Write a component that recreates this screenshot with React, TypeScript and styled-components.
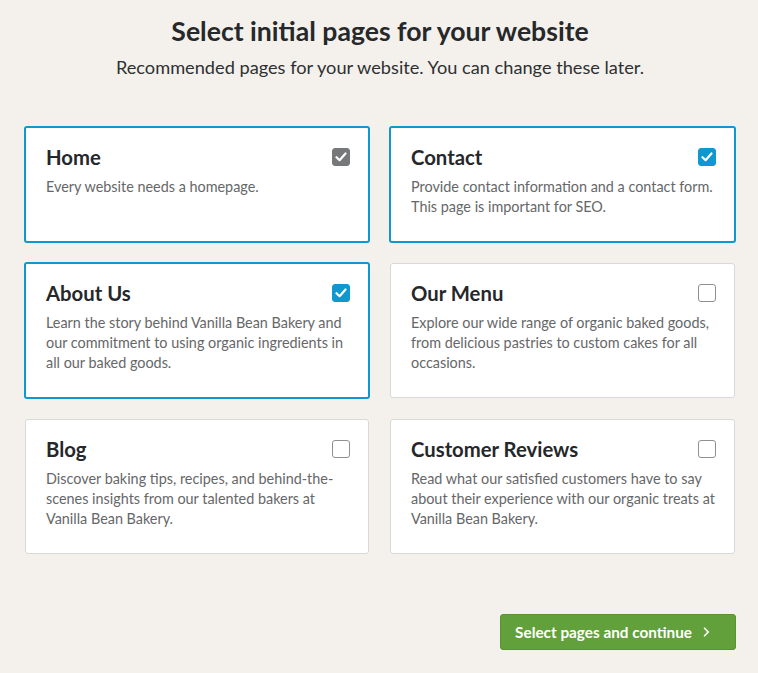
import React, { FC, useState } from "react";
import styled, { createGlobalStyle } from "styled-components";

const GlobalStyle = createGlobalStyle`
  html, body {
    margin: 0;
    padding: 0;
    background: #f4f1ec;
  }
  body {
    font-family: Lato, "Open Sans", sans-serif;
    color: #2b2d2f;
  }
`;

const colors = {
  blue: "#0f97cf",
  gray: "#77787a",
  border: "#d9d9d9",
  green: "#62a03b",
  text: "#666769",
};

const Styled = {
  Page: styled.main`
    width: 758px;
    min-height: 673px;
    box-sizing: border-box;
    padding: 13px 22px 23px 24px;
    display: flex;
    flex-direction: column;
  `,
  Header: styled.header`
    text-align: center;

    & > h1 {
      margin: 0;
      font-size: 26.6px;
      line-height: 36px;
      font-weight: 700;
      color: #26282a;
    }

    & > p {
      margin: 6px 0 0;
      font-size: 18.2px;
      line-height: 24px;
      color: #2e3032;
    }
  `,
  Grid: styled.ul`
    list-style: none;
    margin: 47px 0 0;
    padding: 0;
    display: grid;
    grid-template-columns: 346px 347px;
    column-gap: 19px;
    row-gap: 19px;
  `,
  Footer: styled.footer`
    display: flex;
    justify-content: flex-end;
    margin-top: auto;
  `,
};

const Card = {
  Base: styled.li<{ $selected: boolean }>`
    box-sizing: border-box;
    background: #fff;
    border-radius: 3px;
    cursor: pointer;
    padding: 16px 18px 24px 20px;
    border: ${({ $selected }) =>
      $selected ? `2px solid ${colors.blue}` : `1px solid ${colors.border}`};
    margin: ${({ $selected }) => ($selected ? "0" : "1px")};

    & > p {
      margin: 7px 0 0;
      font-size: 14.4px;
      line-height: 20px;
      color: ${colors.text};
    }
  `,
  Head: styled.div`
    display: flex;
    align-items: center;
    justify-content: space-between;
    gap: 14px;

    & > h2 {
      margin: 0;
      font-size: 20.3px;
      line-height: 26px;
      font-weight: 700;
      color: #25272a;
    }
  `,
  Check: styled.span<{ $state: "on" | "off" | "locked" }>`
    flex: none;
    width: 18px;
    height: 18px;
    box-sizing: border-box;
    border-radius: 3px;
    display: flex;
    align-items: center;
    justify-content: center;
    background: ${({ $state }) =>
      $state === "on" ? colors.blue : $state === "locked" ? colors.gray : "#fff"};
    border: 1px solid
      ${({ $state }) =>
        $state === "on" ? colors.blue : $state === "locked" ? colors.gray : "#8f9092"};
  `,
};

const Button = styled.button`
  display: flex;
  align-items: center;
  gap: 11px;
  height: 36px;
  padding: 0 25px 0 14px;
  background: ${colors.green};
  border: 1px solid #58932f;
  border-radius: 3px;
  color: #fff;
  font-family: Lato, "Open Sans", sans-serif;
  font-size: 15.3px;
  font-weight: 700;
  cursor: pointer;
`;

interface Page {
  title: string;
  description: string;
  selected: boolean;
  locked?: boolean;
}

const initialPages: Page[] = [
  { title: "Home", description: "Every website needs a homepage.", selected: true, locked: true },
  {
    title: "Contact",
    description: "Provide contact information and a contact form. This page is important for SEO.",
    selected: true,
  },
  {
    title: "About Us",
    description:
      "Learn the story behind Vanilla Bean Bakery and our commitment to using organic ingredients in all our baked goods.",
    selected: true,
  },
  {
    title: "Our Menu",
    description:
      "Explore our wide range of organic baked goods, from delicious pastries to custom cakes for all occasions.",
    selected: false,
  },
  {
    title: "Blog",
    description:
      "Discover baking tips, recipes, and behind-the-scenes insights from our talented bakers at Vanilla Bean Bakery.",
    selected: false,
  },
  {
    title: "Customer Reviews",
    description:
      "Read what our satisfied customers have to say about their experience with our organic treats at Vanilla Bean Bakery.",
    selected: false,
  },
];

const CheckMark: FC = () => (
  <svg width="12" height="10" viewBox="0 0 12 10" fill="none">
    <path
      d="M1.5 5.2 L4.6 8.2 L10.5 1.5"
      stroke="#fff"
      strokeWidth="2.2"
      strokeLinecap="round"
      strokeLinejoin="round"
    />
  </svg>
);

const Chevron: FC = () => (
  <svg width="7" height="10" viewBox="0 0 7 10" fill="none">
    <path d="M1.5 1.2 L5.2 5 L1.5 8.8" stroke="#fff" strokeWidth="1.6" strokeLinecap="round" />
  </svg>
);

interface CardProps {
  page: Page;
  onToggle: () => void;
}

const PageCard: FC<CardProps> = ({ page, onToggle }) => {
  const state = page.locked ? "locked" : page.selected ? "on" : "off";
  return (
    <Card.Base $selected={page.selected} onClick={onToggle}>
      <Card.Head>
        <h2>{page.title}</h2>
        <Card.Check $state={state}>{page.selected && <CheckMark />}</Card.Check>
      </Card.Head>
      <p>{page.description}</p>
    </Card.Base>
  );
};

const App: FC = () => {
  const [pages, setPages] = useState(initialPages);

  const toggle = (index: number) =>
    setPages((prev) =>
      prev.map((p, i) => (i === index && !p.locked ? { ...p, selected: !p.selected } : p))
    );

  return (
    <>
      <GlobalStyle />
      <Styled.Page>
        <Styled.Header>
          <h1>Select initial pages for your website</h1>
          <p>Recommended pages for your website. You can change these later.</p>
        </Styled.Header>
        <Styled.Grid>
          {pages.map((page, i) => (
            <PageCard key={page.title} page={page} onToggle={() => toggle(i)} />
          ))}
        </Styled.Grid>
        <Styled.Footer>
          <Button>
            Select pages and continue
            <Chevron />
          </Button>
        </Styled.Footer>
      </Styled.Page>
    </>
  );
};

export default App;
